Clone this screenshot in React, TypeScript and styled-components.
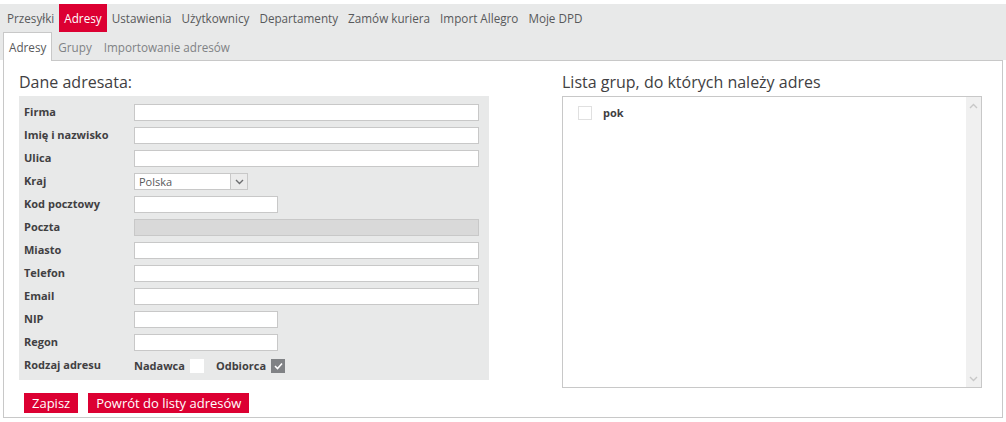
import React from "react";
import styled, { createGlobalStyle } from "styled-components";

const Global = createGlobalStyle`
  html, body { margin: 0; padding: 0; background: #fff; }
  body { font-family: "Open Sans", "Liberation Sans", sans-serif; color: #414042; }
  * { box-sizing: border-box; }
`;

const Page = styled.div`
  padding-top: 4px;
  width: 1006px;
`;

const NavBar = styled.nav`
  display: flex;
  align-items: stretch;
  height: 28px;
  background: #e8e9e9;
  padding-left: 2px;
`;

const NavItem = styled.a<{ $active?: boolean }>`
  display: flex;
  align-items: center;
  padding: 0 5px;
  font-size: 11.7px;
  color: ${(p) => (p.$active ? "#fff" : "#58595b")};
  background: ${(p) => (p.$active ? "#dc0032" : "transparent")};
  text-decoration: none;
  white-space: nowrap;
`;

const SubBar = styled.div`
  display: flex;
  align-items: stretch;
  height: 28px;
  background: #e8e9e9;
  padding-left: 3px;
`;

const SubTab = styled.a<{ $active?: boolean }>`
  display: flex;
  align-items: center;
  padding: 0 5px;
  font-size: 11.7px;
  color: ${(p) => (p.$active ? "#58595b" : "#808285")};
  background: ${(p) => (p.$active ? "#fff" : "transparent")};
  border: 1px solid ${(p) => (p.$active ? "#c8c8c8" : "transparent")};
  border-bottom: none;
  margin-bottom: -1px;
  position: relative;
  white-space: nowrap;
`;

const Panel = styled.main`
  margin-left: 3px;
  width: 1000px;
  height: 358px;
  border: 1px solid #c8c8c8;
  background: #fff;
  display: grid;
  grid-template-columns: 470px 420px;
  column-gap: 73px;
  padding: 11px 0 0 15px;
`;

const Column = styled.section`
  display: flex;
  flex-direction: column;
`;

const Heading = styled.h2`
  margin: 0 0 4px 0;
  font-size: 16px;
  font-weight: 400;
  line-height: 20px;
  color: #414042;
`;

const FormBox = styled.div`
  background: #e8e9e9;
  padding: 8px 10px 0 5px;
  height: 284px;
`;

const Row = styled.div`
  display: grid;
  grid-template-columns: 110px 1fr;
  align-items: start;
  height: 23px;
`;

const Label = styled.label`
  font-size: 11px;
  font-weight: 700;
  line-height: 16px;
  color: #414042;
`;

const Input = styled.div<{ $w?: number; $disabled?: boolean }>`
  width: ${(p) => (p.$w ? `${p.$w}px` : "100%")};
  height: 17px;
  background: ${(p) => (p.$disabled ? "#d9d9d9" : "#fff")};
  border: 1px solid #c8c8c8;
`;

const Select = styled.div`
  width: 114px;
  height: 17px;
  background: #fff;
  border: 1px solid #c8c8c8;
  display: flex;
  align-items: stretch;
`;

const SelectValue = styled.span`
  flex: 1;
  font-size: 11px;
  line-height: 15px;
  padding-left: 4px;
  color: #58595b;
`;

const SelectButton = styled.span`
  width: 17px;
  background: #ebebeb;
  border-left: 1px solid #c8c8c8;
  display: flex;
  align-items: center;
  justify-content: center;
`;

const CheckGroup = styled.div`
  display: flex;
  align-items: center;
  height: 17px;
`;

const CheckLabel = styled.span`
  font-size: 11px;
  font-weight: 700;
  color: #414042;
  margin-right: 5px;
`;

const Box = styled.span<{ $checked?: boolean }>`
  width: 14px;
  height: 14px;
  background: ${(p) => (p.$checked ? "#808285" : "#fff")};
  display: inline-flex;
  align-items: center;
  justify-content: center;
  margin-right: 12px;
`;

const Buttons = styled.div`
  display: flex;
  gap: 10px;
  margin-top: 13px;
  padding-left: 5px;
`;

const Button = styled.button`
  height: 20px;
  padding: 0 8px;
  border: none;
  background: #dc0032;
  color: #fff;
  font-family: "Open Sans", "Liberation Sans", sans-serif;
  font-size: 13px;
  line-height: 20px;
`;

const ListBox = styled.div`
  height: 292px;
  border: 1px solid #c8c8c8;
  display: flex;
`;

const ListContent = styled.div`
  flex: 1;
  padding: 8px 0 0 15px;
`;

const ListItem = styled.div`
  display: flex;
  align-items: center;
  gap: 11px;
`;

const ListCheck = styled.span`
  width: 14px;
  height: 14px;
  border: 1px solid #e0e0e0;
  background: #fff;
`;

const ListText = styled.span`
  font-size: 11px;
  font-weight: 700;
  color: #414042;
`;

const Scrollbar = styled.div`
  width: 15px;
  background: #f0f0f0;
  display: flex;
  flex-direction: column;
  justify-content: space-between;
  align-items: center;
  padding: 6px 0 5px;
`;

const Chevron = ({ up, color = "#a3a3a3" }: { up?: boolean; color?: string }) => (
  <svg width="9" height="6" viewBox="0 0 9 6">
    <path
      d={up ? "M1 5 L4.5 1.5 L8 5" : "M1 1 L4.5 4.5 L8 1"}
      fill="none"
      stroke={color}
      strokeWidth="1.4"
    />
  </svg>
);

const Check = () => (
  <svg width="9" height="8" viewBox="0 0 9 8">
    <path d="M1 4 L3.5 6.5 L8 1.5" fill="none" stroke="#fff" strokeWidth="1.6" />
  </svg>
);

const navItems = ["Przesyłki", "Adresy", "Ustawienia", "Użytkownicy", "Departamenty", "Zamów kuriera", "Import Allegro", "Moje DPD"];
const subItems = ["Adresy", "Grupy", "Importowanie adresów"];

type Field = { label: string; kind: "wide" | "short" | "select" | "disabled" };
const fields: Field[] = [
  { label: "Firma", kind: "wide" },
  { label: "Imię i nazwisko", kind: "wide" },
  { label: "Ulica", kind: "wide" },
  { label: "Kraj", kind: "select" },
  { label: "Kod pocztowy", kind: "short" },
  { label: "Poczta", kind: "disabled" },
  { label: "Miasto", kind: "wide" },
  { label: "Telefon", kind: "wide" },
  { label: "Email", kind: "wide" },
  { label: "NIP", kind: "short" },
  { label: "Regon", kind: "short" },
];

export default function App() {
  return (
    <Page>
      <Global />
      <NavBar>
        {navItems.map((n) => (
          <NavItem key={n} $active={n === "Adresy"}>{n}</NavItem>
        ))}
      </NavBar>
      <SubBar>
        {subItems.map((n, i) => (
          <SubTab key={n} $active={i === 0}>{n}</SubTab>
        ))}
      </SubBar>
      <Panel>
        <Column>
          <Heading>Dane adresata:</Heading>
          <FormBox>
            {fields.map((f) => (
              <Row key={f.label}>
                <Label>{f.label}</Label>
                {f.kind === "select" ? (
                  <Select>
                    <SelectValue>Polska</SelectValue>
                    <SelectButton><Chevron color="#6d6e70" /></SelectButton>
                  </Select>
                ) : (
                  <Input $w={f.kind === "short" ? 144 : undefined} $disabled={f.kind === "disabled"} />
                )}
              </Row>
            ))}
            <Row>
              <Label>Rodzaj adresu</Label>
              <CheckGroup>
                <CheckLabel>Nadawca</CheckLabel>
                <Box />
                <CheckLabel>Odbiorca</CheckLabel>
                <Box $checked><Check /></Box>
              </CheckGroup>
            </Row>
          </FormBox>
          <Buttons>
            <Button>Zapisz</Button>
            <Button>Powrót do listy adresów</Button>
          </Buttons>
        </Column>
        <Column>
          <Heading>Lista grup, do których należy adres</Heading>
          <ListBox>
            <ListContent>
              <ListItem>
                <ListCheck />
                <ListText>pok</ListText>
              </ListItem>
            </ListContent>
            <Scrollbar>
              <Chevron up color="#c8c8c8" />
              <Chevron color="#c8c8c8" />
            </Scrollbar>
          </ListBox>
        </Column>
      </Panel>
    </Page>
  );
}
